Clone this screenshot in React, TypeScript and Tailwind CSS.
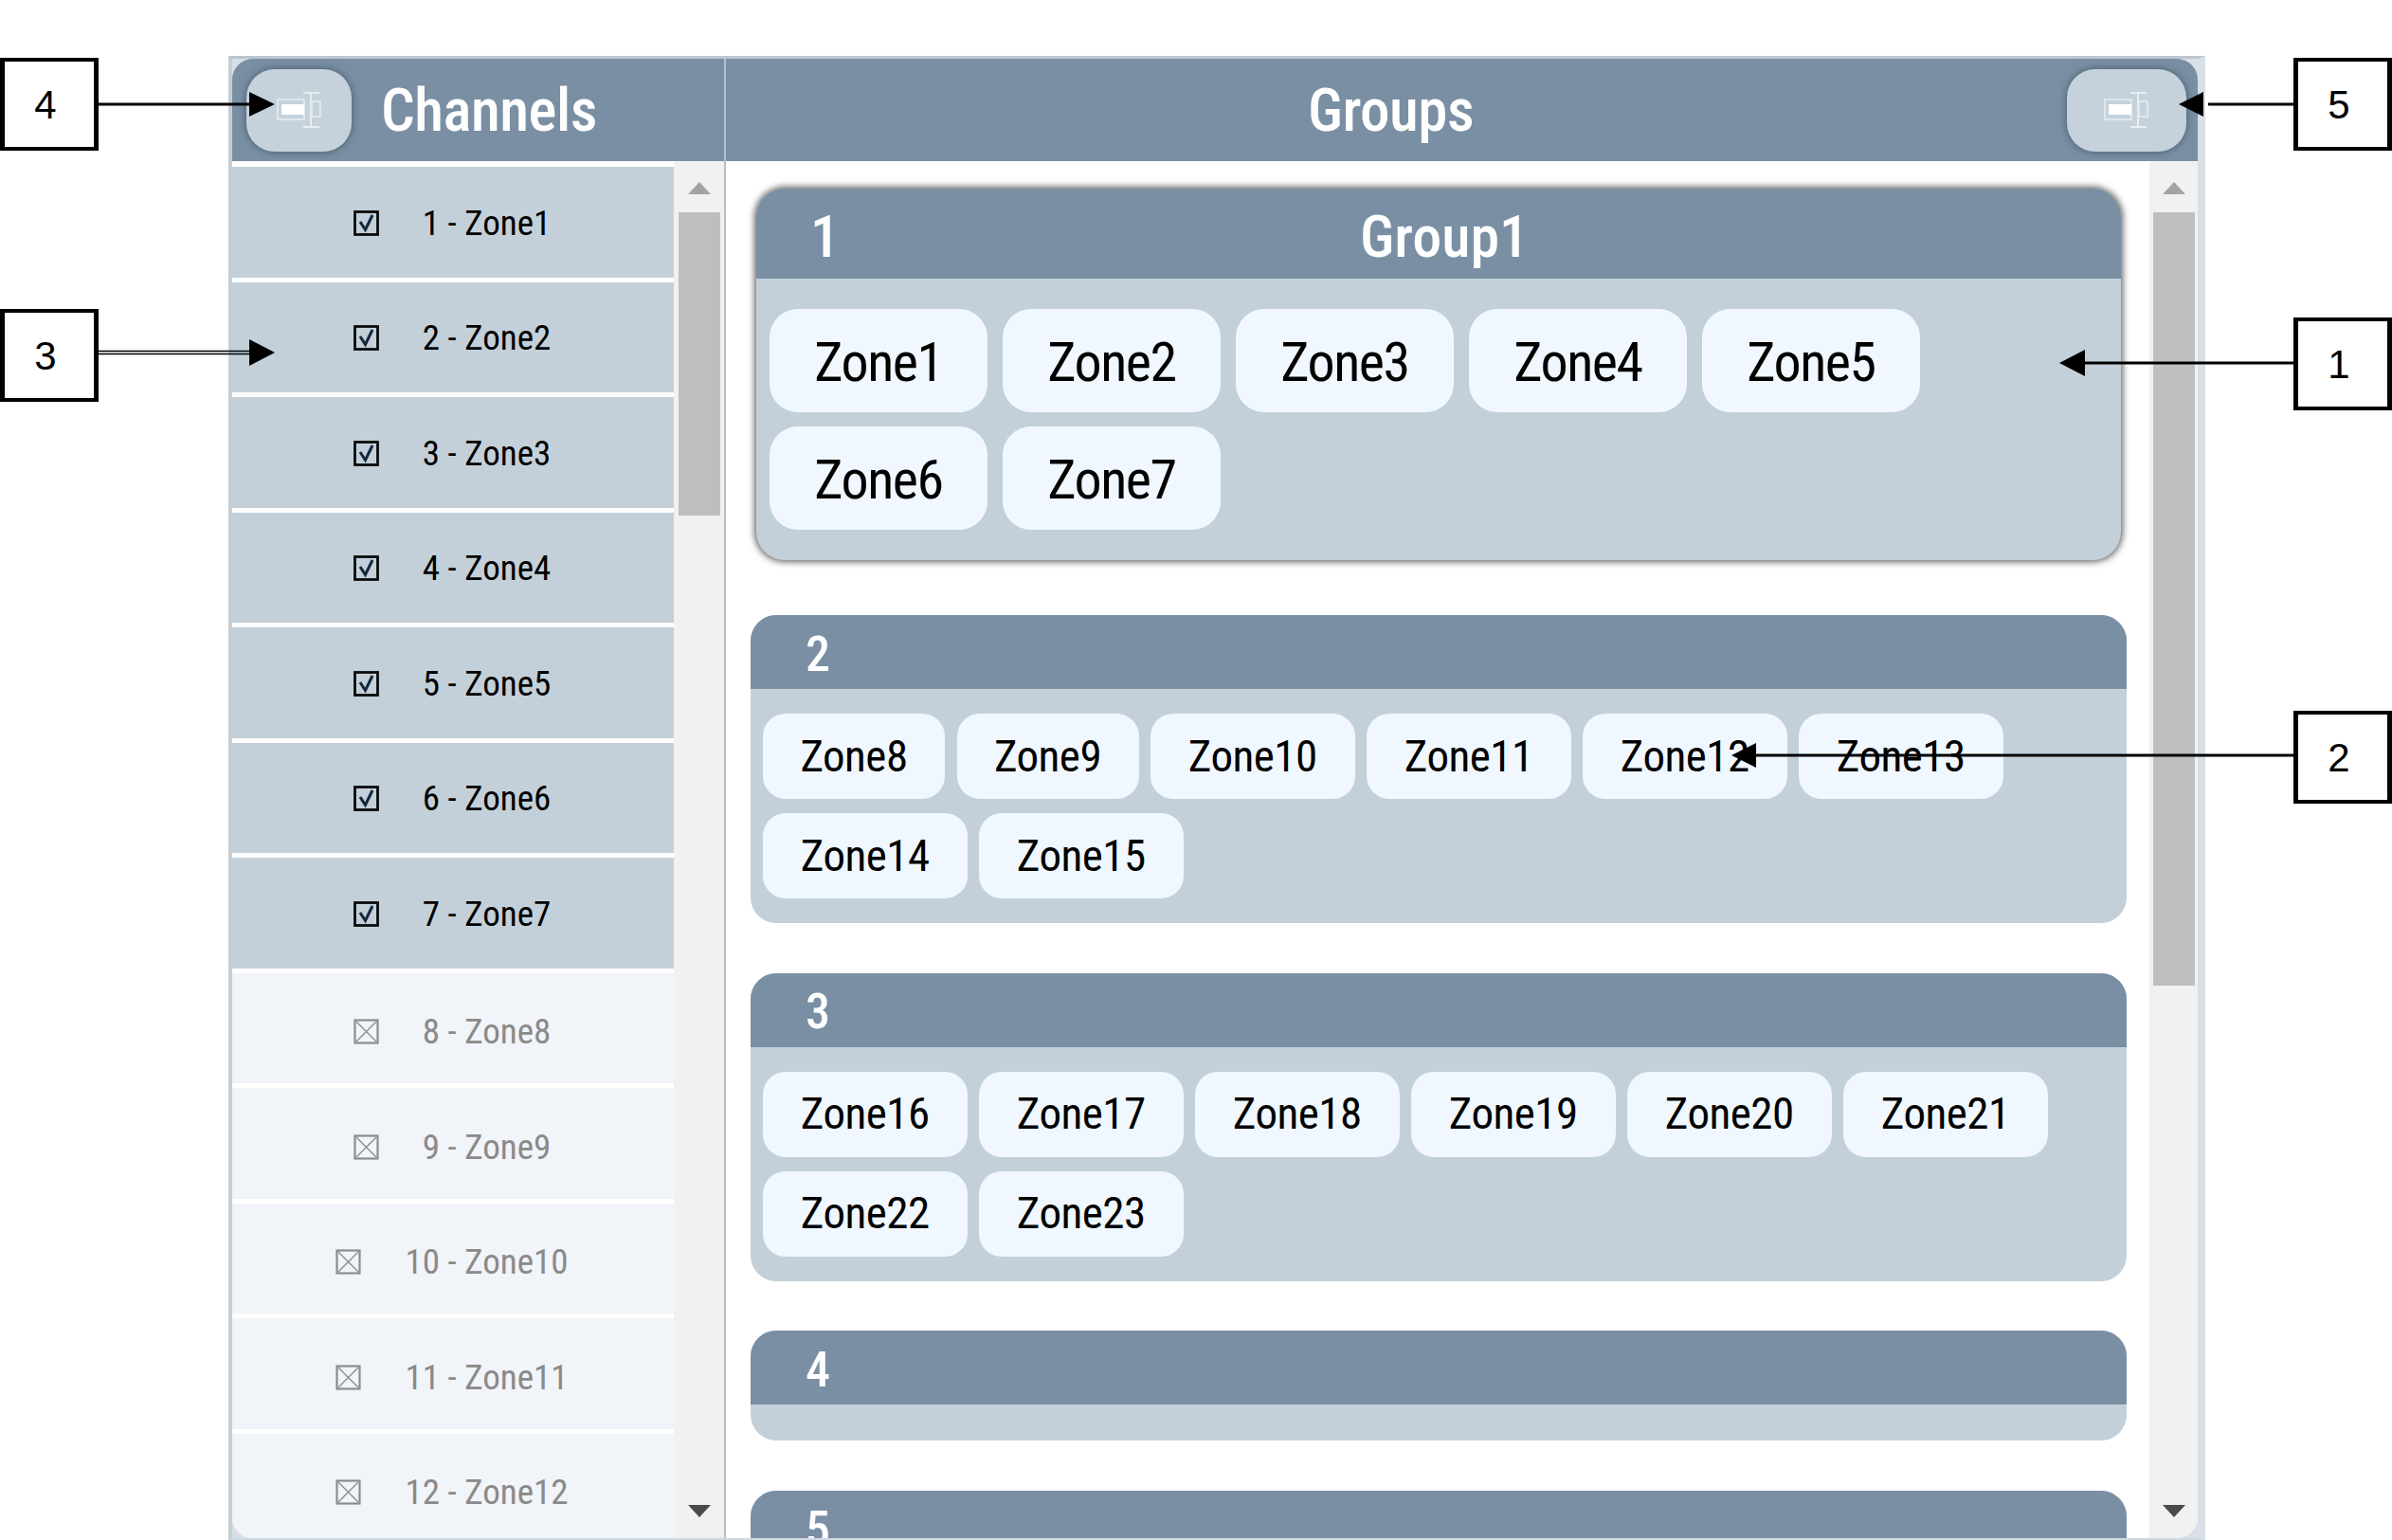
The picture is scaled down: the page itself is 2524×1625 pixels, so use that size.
// Channels and groups panel with numbered callouts over it.

const channels = Array.from({ length: 12 }, (_, i) => i + 1);

const groups = [
  { id: 2, zones: [8, 9, 10, 11, 12, 13, 14, 15] },
  { id: 3, zones: [16, 17, 18, 19, 20, 21, 22, 23] },
  { id: 4, zones: [] as number[] },
  { id: 5, zones: [] as number[] },
];

function CheckBox({ checked }: { checked: boolean }) {
  const color = checked ? "#0b0b0b" : "#8c8c8c";
  return (
    <svg width="27" height="27" viewBox="0 0 27 27" fill="none" className="shrink-0">
      <rect x="1.5" y="1.5" width="24" height="24" stroke={color} strokeWidth={checked ? 2.8 : 2.2} />
      {checked ? (
        <path d="M7 12l5.5 8.5L20 5" stroke="#16263a" strokeWidth="3" />
      ) : (
        <path d="M3 3l21 21M24 3L3 24" stroke={color} strokeWidth="1.4" />
      )}
    </svg>
  );
}

function ColumnIcon() {
  return (
    <svg width="48" height="40" viewBox="0 0 48 40" fill="none">
      <rect x="1" y="9" width="28" height="21" stroke="#dfe7ec" strokeWidth="2" />
      <rect x="5" y="14" width="24" height="11" fill="#fff" />
      <path d="M36 2v36M28 2h17M28 38h17" stroke="#e8eef2" strokeWidth="2" />
      <rect x="37" y="11" width="9" height="16" stroke="#dfe7ec" strokeWidth="2" />
    </svg>
  );
}

function HeaderButton({ wide }: { wide?: boolean }) {
  return (
    <button
      className={`flex h-[87px] shrink-0 items-center justify-center rounded-[30px] bg-[#c5d2db] shadow-[0_0_9px_#46596c] ${
        wide ? "w-[126px]" : "w-[111px]"
      }`}
    >
      <ColumnIcon />
    </button>
  );
}

function ScrollBar({ thumb }: { thumb: string }) {
  return (
    <div className="flex h-full w-full flex-col items-center bg-[#f1f1f1] pt-[22px]">
      <div className="h-0 w-0 border-x-[12px] border-b-[13px] border-x-transparent border-b-[#a3a3a3]" />
      <div className={`mt-[19px] w-[44px] bg-[#bebebe] ${thumb}`} />
      <div className="mt-auto mb-[22px] h-0 w-0 border-x-[12px] border-t-[13px] border-x-transparent border-t-[#4a4a4a]" />
    </div>
  );
}

function ChannelRow({ n }: { n: number }) {
  const on = n <= 7;
  return (
    <div
      className={`mb-[5px] flex h-[116.5px] shrink-0 items-center justify-center gap-[46px] pr-[2px] text-[37px] ${
        on ? "bg-[#c3d0d9] pt-[2px] text-black" : "bg-[#f1f4f8] pt-[8px] text-[#8a8a8a]"
      }`}
    >
      <CheckBox checked={on} />
      <span>
        {n} - Zone{n}
      </span>
    </div>
  );
}

function Chip({ n, big }: { n: number; big?: boolean }) {
  const size = big
    ? "h-[109px] w-[230px] rounded-[30px] pt-[3px] text-[58px] tracking-[-1.5px]"
    : n < 10
      ? "h-[90px] w-[192px] rounded-[24px] text-[47px] tracking-[-0.5px]"
      : "h-[90px] w-[215.5px] rounded-[24px] text-[47px] tracking-[-0.5px]";
  return <div className={`flex items-center justify-center bg-[#f0f7ff] text-black ${size}`}>Zone{n}</div>;
}

function SelectedGroup() {
  return (
    <section className="mx-[6px] mb-[58px] shrink-0 overflow-hidden rounded-[30px] bg-[#c3d0d9] shadow-[0_0_7px_2px_#666]">
      <header className="flex h-[95px] items-center bg-[#7a8fa4] pl-[57px] pt-[5px] text-[62px] font-medium text-white">
        <span>1</span>
        <span className="flex-1 pr-[6px] text-center">Group1</span>
        <span className="w-[70px]" />
      </header>
      <div className="flex flex-wrap gap-x-[16px] gap-y-[15px] px-[14px] py-[32px]">
        {[1, 2, 3, 4, 5, 6, 7].map((n) => (
          <Chip key={n} n={n} big />
        ))}
      </div>
    </section>
  );
}

function Group({ id, zones }: { id: number; zones: number[] }) {
  return (
    <section className="mb-[52.5px] shrink-0 overflow-hidden rounded-[27px] bg-[#c3d0d9]">
      <header className="flex h-[78px] items-center bg-[#7a8fa4] pl-[58px] pt-[5px] text-[52px] font-medium text-white">
        {id}
      </header>
      {zones.length > 0 ? (
        <div className="flex flex-wrap gap-x-[12.5px] gap-y-[15px] px-[13px] py-[26px]">
          {zones.map((n) => (
            <Chip key={n} n={n} />
          ))}
        </div>
      ) : (
        <div className="h-[38px]" />
      )}
    </section>
  );
}

function Callout({ label, className }: { label: string; className: string }) {
  return (
    <div
      className={`absolute flex h-[98px] w-[104px] items-center justify-center border-x-[5px] border-y-[4px] border-black bg-white pr-[8px] font-['Liberation_Sans',sans-serif] text-[42px] text-black ${className}`}
    >
      {label}
    </div>
  );
}

function Arrows() {
  return (
    <svg className="absolute inset-0" width="2524" height="1625" fill="none">
      <path d="M104 110H270M2330 110H2421M2190 383H2421M1840 797H2421" stroke="#000" strokeWidth="3" />
      <path d="M104 370.5H270M104 373.5H270" stroke="#000" strokeWidth="1.5" />
      <path d="M263 97l27 13-27 13zM263 358l27 14-27 14zM2325 97l-26 13 26 13zM2200 369l-27 14 27 14zM1853 784l-26 13 26 13z" fill="#000" />
    </svg>
  );
}

export default function App() {
  return (
    <div className="relative h-[1625px] w-[2524px] overflow-hidden bg-white font-['Roboto',sans-serif] font-stretch-condensed">
      <div className="ml-[241px] mt-[59px] flex h-[1566px] w-[2086px] flex-col border-t-[3px] border-r-[8px] border-b-[2px] border-l-[4px] border-t-[#bcc6cf] border-r-[#d8dfe6] border-b-[#d0d8df] border-l-[#c3ced7] bg-[#d8dfe6]">
        {/* Title bar */}
        <div className="flex h-[108px] shrink-0 overflow-hidden rounded-t-[22px] bg-[#7a8fa4] text-white">
          <div className="flex w-[519px] shrink-0 items-center pl-[15px] text-[63px] font-medium tracking-[-0.5px]">
            <HeaderButton />
            <span className="ml-[31px] pt-[3px]">Channels</span>
          </div>
          <div className="w-[2px] bg-[#b6c3ce]" />
          <div className="flex flex-1 items-center pr-[12px] text-[63px] font-medium tracking-[-0.5px]">
            <span className="flex-1 pr-[12px] pt-[3px] text-center">Groups</span>
            <HeaderButton wide />
          </div>
        </div>

        {/* Body */}
        <div className="flex min-h-0 flex-1 overflow-hidden rounded-b-[22px] bg-white">
          <div className="flex h-full w-[466px] shrink-0 flex-col overflow-hidden pt-[6px]">
            {channels.map((n) => (
              <ChannelRow key={n} n={n} />
            ))}
          </div>
          <div className="h-full w-[53px] shrink-0">
            <ScrollBar thumb="h-[320px]" />
          </div>
          <div className="h-full w-[2px] shrink-0 bg-[#b6c0c8]" />
          <div className="flex h-full w-[1502px] shrink-0 flex-col overflow-hidden pl-[26px] pr-[24px] pt-[29px]">
            <SelectedGroup />
            {groups.map((g) => (
              <Group key={g.id} id={g.id} zones={g.zones} />
            ))}
          </div>
          <div className="h-full w-[51px] shrink-0">
            <ScrollBar thumb="h-[816px]" />
          </div>
        </div>
      </div>

      <Arrows />
      <Callout label="4" className="left-0 top-[61px]" />
      <Callout label="3" className="left-0 top-[326px]" />
      <Callout label="5" className="left-[2420px] top-[61px]" />
      <Callout label="1" className="left-[2420px] top-[335px]" />
      <Callout label="2" className="left-[2420px] top-[750px]" />
    </div>
  );
}
